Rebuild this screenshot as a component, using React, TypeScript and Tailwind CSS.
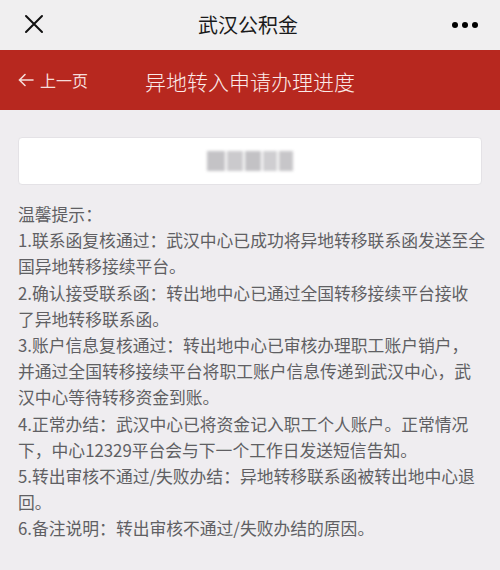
import React from "react";

const tips: string[][] = [
  ["1.联系函复核通过：武汉中心已成功将异地转移联系函发送至全", "国异地转移接续平台。"],
  ["2.确认接受联系函：转出地中心已通过全国转移接续平台接收", "了异地转移联系函。"],
  [
    "3.账户信息复核通过：转出地中心已审核办理职工账户销户，",
    "并通过全国转移接续平台将职工账户信息传递到武汉中心，武",
    "汉中心等待转移资金到账。",
  ],
  ["4.正常办结：武汉中心已将资金记入职工个人账户。正常情况", "下，中心12329平台会与下一个工作日发送短信告知。"],
  ["5.转出审核不通过/失败办结：异地转移联系函被转出地中心退", "回。"],
  ["6.备注说明：转出审核不通过/失败办结的原因。"],
];

export default function App() {
  return (
    <div
      className="flex h-[570px] w-[500px] flex-col overflow-hidden bg-[#efedf0]"
      style={{ fontFamily: '"PingFang SC", "Noto Sans CJK SC", "Noto Sans", sans-serif' }}
    >
      {/* wechat title bar */}
      <div className="flex h-[50px] items-center justify-between bg-[#f0eff0] px-[24px]">
        <svg width="20" height="20" viewBox="0 0 20 20" className="mt-[-2px]">
          <path d="M2 2 L18 18 M18 2 L2 18" stroke="#111" strokeWidth="2" strokeLinecap="round" />
        </svg>
        <div className="text-[20px] font-normal text-[#1a1a1a]">武汉公积金</div>
        <div className="mr-[-2px] flex gap-[4px]">
          <span className="h-[6px] w-[6px] rounded-full bg-black" />
          <span className="h-[6px] w-[6px] rounded-full bg-black" />
          <span className="h-[6px] w-[6px] rounded-full bg-black" />
        </div>
      </div>

      {/* red header */}
      <div className="relative flex h-[60px] items-center justify-center bg-[#b7281f] text-white">
        <div className="absolute left-[18px] top-0 flex h-full items-center gap-[6px] text-[16px] text-[#f6dcd9]">
          <svg width="16" height="14" viewBox="0 0 16 14">
            <path d="M15 7 H2 M7 1.5 L1.5 7 L7 12.5" stroke="#f6dcd9" strokeWidth="1.6" fill="none" strokeLinecap="round" />
          </svg>
          <span>上一页</span>
        </div>
        <div className="pt-[4px] text-[21px] font-light text-[#fbeae8]">异地转入申请办理进度</div>
      </div>

      <div className="px-[18px] pt-[27px]">
        <div className="flex h-[48px] items-center justify-center rounded-[4px] border border-[#e4e2e6] bg-white">
          <div className="flex h-[20px] gap-[2px] blur-[1.5px]">
            <div className="w-[18px] bg-[#c4c3c6]" />
            <div className="w-[16px] bg-[#cbcacd]" />
            <div className="w-[16px] bg-[#c3c2c5]" />
            <div className="w-[14px] bg-[#cfced1]" />
            <div className="w-[14px] bg-[#c7c6c9]" />
          </div>
        </div>

        <div className="mt-[16px] text-[16.8px] leading-[26.2px] text-[#605f63]">
          <div>温馨提示：</div>
          {tips.map((lines, i) => (
            <div key={i} className="whitespace-nowrap">
              {lines.map((line, j) => (
                <div key={j}>{line}</div>
              ))}
            </div>
          ))}
        </div>
      </div>
    </div>
  );
}
